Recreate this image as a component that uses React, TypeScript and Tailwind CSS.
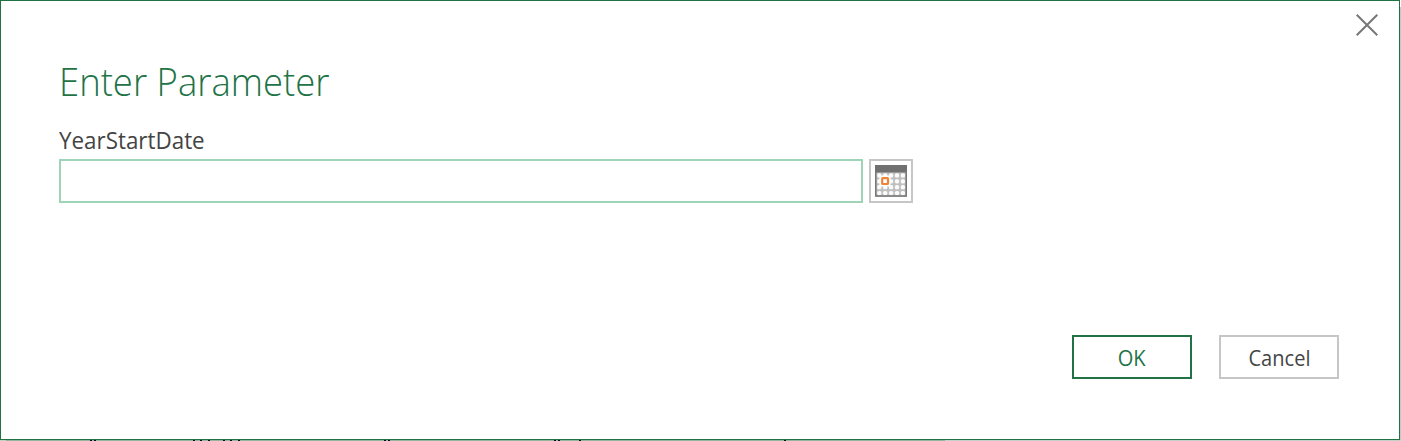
import React from "react";

const CELL_COLUMNS = [2.2, 8.1, 14, 19.9, 25.8];
const CELL_ROWS = [8.3, 14.2, 20.1, 26];

function CalendarIcon() {
  return (
    <svg width="32" height="32" viewBox="0 0 32 32" aria-hidden="true">
      <rect width="32" height="32" fill="#c0c0c0" />
      {CELL_ROWS.map((y) =>
        CELL_COLUMNS.map((x) => (
          <rect key={`${x}-${y}`} x={x} y={y} width="4.2" height="4.2" rx="1.6" fill="#fbfbfb" />
        )),
      )}
      <rect width="32" height="7.5" fill="#707070" />
      <path d="M0.75 7V31H31.25V7" fill="none" stroke="#777" strokeWidth="1.5" />
      <rect x="4.5" y="10.5" width="11" height="11" rx="1" fill="#fff" />
      <rect x="7.2" y="13.2" width="5.8" height="5.8" rx="0.5" fill="#fff" stroke="#ed8439" strokeWidth="2.2" />
    </svg>
  );
}

const BACKDROP_MARKS: [number, number][] = [
  [90, 2], [94, 2], [193, 2], [200, 2], [208, 2], [223, 2], [230, 2], [238, 2],
  [384, 2], [388, 2], [554, 2], [558, 2], [579, 2], [784, 2],
];

function BackdropEdge() {
  return (
    <svg className="block" width="1401" height="1" viewBox="0 0 1401 1" aria-hidden="true">
      <rect width="1401" height="1" fill="#c6cfc9" />
      <rect x="6" width="939" height="1" fill="#93b59f" />
      {BACKDROP_MARKS.map(([x, width]) => (
        <rect key={x} x={x} width={width} height="1" fill="#08101c" />
      ))}
    </svg>
  );
}

export default function App() {
  return (
    <div className="h-[441px] w-[1401px] overflow-hidden bg-white font-['Open_Sans','Noto_Sans',sans-serif]">
      <div className="flex">
        <main className="relative flex h-[440px] w-[1400px] flex-col border border-[#217346] bg-white pl-[58px]">
          <button aria-label="Close" className="absolute top-[13px] right-[21px]">
            <svg width="22" height="22" viewBox="0 0 22 22" fill="none" stroke="#777" strokeWidth="2">
              <path d="M0.7 0.7L21.3 21.3M21.3 0.7L0.7 21.3" />
            </svg>
          </button>
          <h1 className="mt-[53px] h-[54px] text-[39px] leading-[54px] font-light whitespace-nowrap text-[#217346]">
            <span className="inline-block origin-left scale-x-[0.935]">Enter Parameter</span>
          </h1>
          <label className="mt-[17px] h-[30px] text-[23px] leading-[30px] text-[#444]">
            <span className="inline-block origin-left scale-x-[0.973]">YearStartDate</span>
          </label>
          <div className="mt-[4px] flex gap-[6px]">
            <input className="h-[44px] w-[804px] border-2 border-[#9fd5b7] bg-white px-2 text-xl outline-none" />
            <button aria-label="Choose date" className="flex h-[44px] w-[44px] items-center justify-center border-2 border-[#c6c6c6]">
              <CalendarIcon />
            </button>
          </div>
          <div className="mt-[132px] mr-[60px] flex justify-end gap-[27px] text-[21px]">
            <button className="h-[44px] w-[120px] border-2 border-[#217346] pt-[3px] text-[#217346]">
              <span className="inline-block scale-x-[0.955]">OK</span>
            </button>
            <button className="h-[44px] w-[120px] border-2 border-[#c6c6c6] pt-[3px] text-[#444]">
              <span className="inline-block scale-x-[0.955]">Cancel</span>
            </button>
          </div>
        </main>
        <div className="mt-[7px] w-px bg-[#c6c6c6]" />
      </div>
      <BackdropEdge />
    </div>
  );
}
